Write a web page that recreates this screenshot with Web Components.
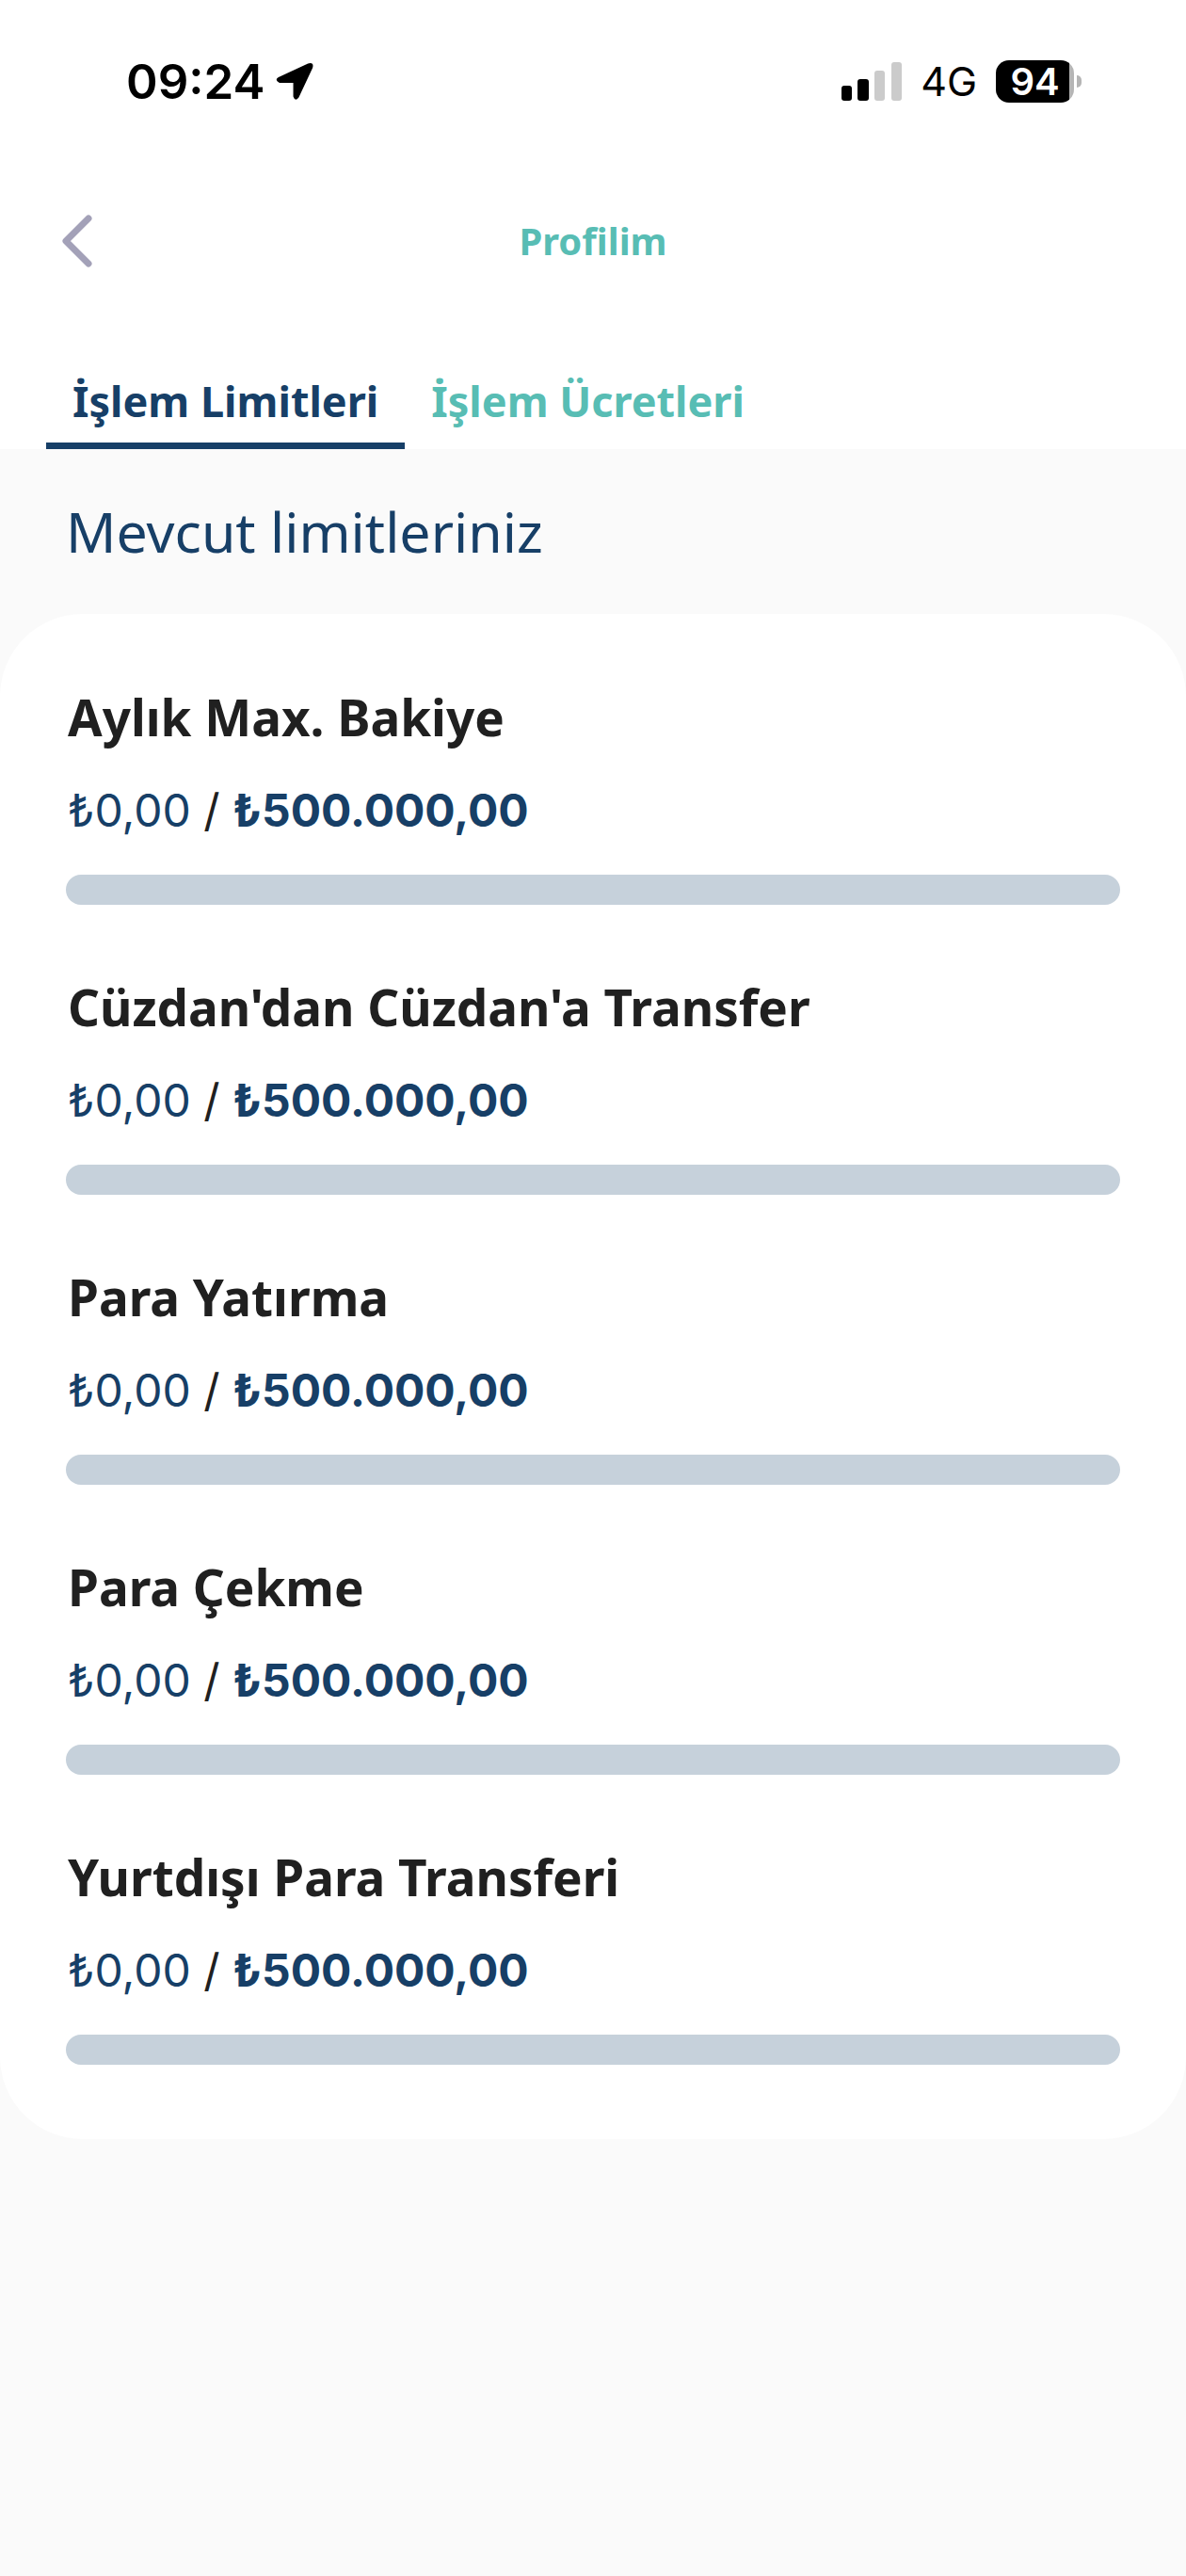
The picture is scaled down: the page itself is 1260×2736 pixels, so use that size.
<!DOCTYPE html>
<html lang="tr">
<head>
<meta charset="UTF-8">
<meta name="viewport" content="width=device-width, initial-scale=1">
<title>Profilim</title>
<style>
  body {
    margin: 0;
    min-height: 100vh;
    background: #fafafa;
    font-family: "Noto Sans", "Open Sans", sans-serif;
    --navy: #173f67;
    --teal: #58bdb4;
    --ink: #202020;
    --track: #c6d1db;
  }
</style>
</head>
<body>
  <status-bar time="09:24" network="4G" battery="94"></status-bar>
  <page-header>Profilim</page-header>
  <tab-bar>
    <tab-item selected>İşlem Limitleri</tab-item>
    <tab-item>İşlem Ücretleri</tab-item>
  </tab-bar>
  <limit-list>
    <span slot="heading">Mevcut limitleriniz</span>
    <limit-item used="0,00" max="500.000,00">Aylık Max. Bakiye</limit-item>
    <limit-item used="0,00" max="500.000,00">Cüzdan'dan Cüzdan'a Transfer</limit-item>
    <limit-item used="0,00" max="500.000,00">Para Yatırma</limit-item>
    <limit-item used="0,00" max="500.000,00">Para Çekme</limit-item>
    <limit-item used="0,00" max="500.000,00">Yurtdışı Para Transferi</limit-item>
  </limit-list>

<script>
class StatusBar extends HTMLElement {
  static styles = `
    <style>
      :host {
        display: flex;
        justify-content: space-between;
        align-items: center;
        height: 172px;
        padding: 0 111px 0 134px;
        box-sizing: border-box;
        background: #fff;
        color: #000;
        font-family: Inter, "Liberation Sans", sans-serif;
      }
      .left, .right {
        display: flex;
        align-items: center;
      }
      .left {
        gap: 12px;
        font-size: 51px;
        font-weight: 600;
      }
      .right {
        gap: 20px;
        font-size: 43px;
      }
      .battery {
        display: flex;
        align-items: center;
        gap: 3px;
      }
      .level {
        display: flex;
        align-items: center;
        justify-content: center;
        width: 83px;
        height: 45px;
        border-radius: 14px;
        background: linear-gradient(90deg, #000 94%, #b5b5b5 94%);
        color: #fff;
        font-size: 40px;
        font-weight: 600;
      }
      .cap {
        width: 5px;
        height: 13px;
        border-radius: 0 5px 5px 0;
        background: #b5b5b5;
      }
      svg {
        display: block;
      }
    </style>
  `;

  constructor() {
    super();
    this.attachShadow({ mode: 'open' });
  }

  connectedCallback() {
    this.shadowRoot.innerHTML = `
      ${StatusBar.styles}
      <div class="left">
        <span>${this.getAttribute('time')}</span>
        <svg width="41" height="42" viewBox="0 0 42 42" aria-hidden="true">
          <path d="M3 17 35 2Q42 0 40 7L25 39Q21 44 19 38V23H4Q-2 20 3 17Z"/>
        </svg>
      </div>
      <div class="right">
        <svg width="64" height="41" viewBox="0 0 64 41" aria-hidden="true">
          <rect x="0" y="25" width="11" height="16" rx="3"/>
          <rect x="17" y="18" width="12" height="23" rx="3"/>
          <rect x="35" y="9" width="11" height="32" rx="3" fill="#cbcbcb"/>
          <rect x="53" y="0" width="11" height="41" rx="3" fill="#cbcbcb"/>
        </svg>
        <span>${this.getAttribute('network')}</span>
        <div class="battery">
          <span class="level">${this.getAttribute('battery')}</span>
          <span class="cap"></span>
        </div>
      </div>
    `;
  }
}

class PageHeader extends HTMLElement {
  static styles = `
    <style>
      :host {
        display: grid;
        grid-template-columns: 1fr auto 1fr;
        align-items: center;
        height: 168px;
        padding: 0 64px;
        box-sizing: border-box;
        background: #fff;
      }
      button {
        justify-self: start;
        padding: 0;
        border: none;
        background: none;
        cursor: pointer;
      }
      svg {
        display: block;
      }
      h1 {
        margin: 0;
        color: var(--teal);
        font-size: 40px;
        font-weight: 700;
        line-height: 56px;
      }
    </style>
  `;

  constructor() {
    super();
    this.attachShadow({ mode: 'open' });
  }

  connectedCallback() {
    this.shadowRoot.innerHTML = `
      ${PageHeader.styles}
      <button type="button" aria-label="Geri">
        <svg width="36" height="58" viewBox="0 0 36 58" fill="none" stroke="#a3a1b8" stroke-width="7" stroke-linecap="round" stroke-linejoin="round">
          <path d="M30 5 6 29 30 53"/>
        </svg>
      </button>
      <h1><slot></slot></h1>
    `;
  }
}

class TabBar extends HTMLElement {
  static styles = `
    <style>
      :host {
        display: flex;
        height: 137px;
        padding: 0 49px;
        box-sizing: border-box;
        align-items: flex-end;
        background: #fff;
      }
    </style>
  `;

  constructor() {
    super();
    this.attachShadow({ mode: 'open' });
  }

  connectedCallback() {
    this.setAttribute('role', 'tablist');
    this.shadowRoot.innerHTML = `${TabBar.styles}<slot></slot>`;
    this.addEventListener('click', (e) => {
      const tab = e.target.closest('tab-item');
      if (!tab) return;
      this.querySelectorAll('tab-item').forEach((t) => t.toggleAttribute('selected', t === tab));
    });
  }
}

class TabItem extends HTMLElement {
  static observedAttributes = ['selected'];

  static styles = `
    <style>
      :host {
        display: block;
      }
      button {
        display: block;
        padding: 16px 28px;
        border: none;
        border-bottom: 7px solid transparent;
        background: none;
        color: var(--teal);
        font: 700 45px/56px "Noto Sans", "Open Sans", sans-serif;
        cursor: pointer;
      }
      :host([selected]) button {
        border-color: var(--navy);
        color: var(--navy);
      }
    </style>
  `;

  constructor() {
    super();
    this.attachShadow({ mode: 'open' });
    this.shadowRoot.innerHTML = `
      ${TabItem.styles}
      <button type="button" role="tab"><slot></slot></button>
    `;
  }

  attributeChangedCallback() {
    this.shadowRoot.querySelector('button').setAttribute('aria-selected', this.hasAttribute('selected'));
  }
}

class LimitList extends HTMLElement {
  static styles = `
    <style>
      :host {
        display: block;
      }
      h2 {
        margin: 0;
        padding: 51px 70px 52px;
        color: var(--navy);
        font-size: 59px;
        font-weight: 400;
        line-height: 72px;
      }
      .card {
        display: flex;
        flex-direction: column;
        gap: 73px;
        padding: 74px 70px 79px;
        border-radius: 88px;
        background: #fff;
      }
    </style>
  `;

  constructor() {
    super();
    this.attachShadow({ mode: 'open' });
  }

  connectedCallback() {
    this.shadowRoot.innerHTML = `
      ${LimitList.styles}
      <h2><slot name="heading"></slot></h2>
      <div class="card"><slot></slot></div>
    `;
  }
}

class LimitItem extends HTMLElement {
  static styles = `
    <style>
      :host {
        display: block;
      }
      label, .amount {
        padding: 0 2px;
      }
      label {
        display: block;
        color: var(--ink);
        font-size: 53px;
        font-weight: 700;
        line-height: 72px;
      }
      .amount {
        margin: 29px 0 34px;
        color: var(--navy);
        font-family: Inter, "Liberation Sans", sans-serif;
        font-size: 48px;
        line-height: 68px;
      }
      .amount i {
        color: var(--ink);
        font-style: normal;
      }
      progress {
        display: block;
        width: 100%;
        height: 32px;
        border: none;
        border-radius: 16px;
        overflow: hidden;
        appearance: none;
        background: var(--track);
      }
      progress::-webkit-progress-bar {
        background: var(--track);
      }
      progress::-webkit-progress-value {
        background: var(--navy);
      }
    </style>
  `;

  constructor() {
    super();
    this.attachShadow({ mode: 'open' });
  }

  // "500.000,00" -> 500000
  parse(text) {
    return parseFloat(text.replace(/\./g, '').replace(',', '.'));
  }

  connectedCallback() {
    const used = this.getAttribute('used');
    const max = this.getAttribute('max');
    this.shadowRoot.innerHTML = `
      ${LimitItem.styles}
      <label for="bar"><slot></slot></label>
      <div class="amount">₺${used} <i>/</i> <b>₺${max}</b></div>
      <progress id="bar" value="${this.parse(used)}" max="${this.parse(max)}"></progress>
    `;
  }
}

customElements.define('status-bar', StatusBar);
customElements.define('page-header', PageHeader);
customElements.define('tab-bar', TabBar);
customElements.define('tab-item', TabItem);
customElements.define('limit-list', LimitList);
customElements.define('limit-item', LimitItem);
</script>
</body>
</html>
